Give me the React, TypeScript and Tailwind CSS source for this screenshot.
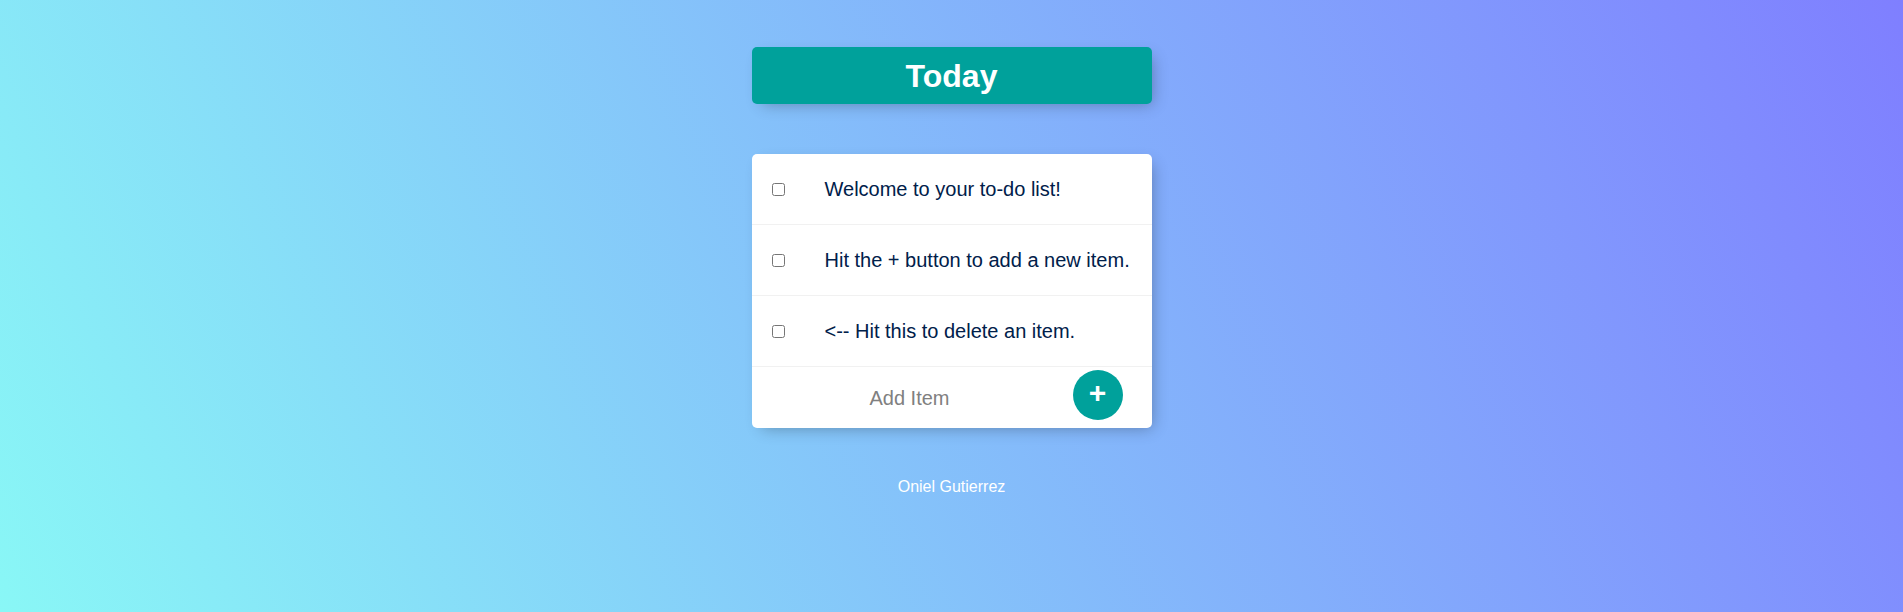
import { useState } from 'react';

const items = [
  'Welcome to your to-do list!',
  'Hit the + button to add a new item.',
  '<-- Hit this to delete an item.',
];

export default function App() {
  const [checked, setChecked] = useState<boolean[]>(items.map(() => false));

  return (
    <div className="min-h-screen w-full bg-[linear-gradient(65deg,#89f7f6,#7f7fff)] font-['Liberation_Sans',Arial,sans-serif] pt-[47px]">
      {/* Heading */}
      <div className="mx-auto w-[400px] h-[57px] rounded-[5px] bg-[#00a19b] shadow-[5px_5px_15px_-5px_rgba(0,0,0,0.3)] flex items-center justify-center">
        <h1 className="text-white text-[32px] font-bold leading-none">Today</h1>
      </div>

      {/* List */}
      <div className="mx-auto mt-[50px] w-[400px] rounded-[5px] bg-white shadow-[5px_5px_15px_-5px_rgba(0,0,0,0.3)]">
        {items.map((text, i) => (
          <div key={i} className="flex items-center min-h-[71px] border-b border-[#f1f1f1]">
            <input
              type="checkbox"
              checked={checked[i]}
              onChange={() => setChecked((c) => c.map((v, j) => (j === i ? !v : v)))}
              className="m-5 w-[13px] h-[13px]"
            />
            <p
              className={
                'p-5 text-[20px] text-[#00204a] leading-[23px] ' +
                (checked[i] ? 'line-through' : '')
              }
            >
              {text}
            </p>
          </div>
        ))}

        <form className="flex items-start pl-5 h-[61px]" onSubmit={(e) => e.preventDefault()}>
          <input
            type="text"
            placeholder="Add Item"
            className="w-[276px] h-[60px] mt-[1px] text-center text-[20px] outline-none placeholder:text-[#808080] text-[#00204a]"
          />
          <button
            type="submit"
            className="ml-[25px] mt-[3px] w-[50px] h-[50px] rounded-full bg-[#00a19b] text-white text-[30px] font-bold leading-none pb-[4px] flex items-center justify-center"
          >
            +
          </button>
        </form>
      </div>

      <footer className="mt-[47px] text-center text-white text-[16px]">Oniel Gutierrez</footer>
    </div>
  );
}
